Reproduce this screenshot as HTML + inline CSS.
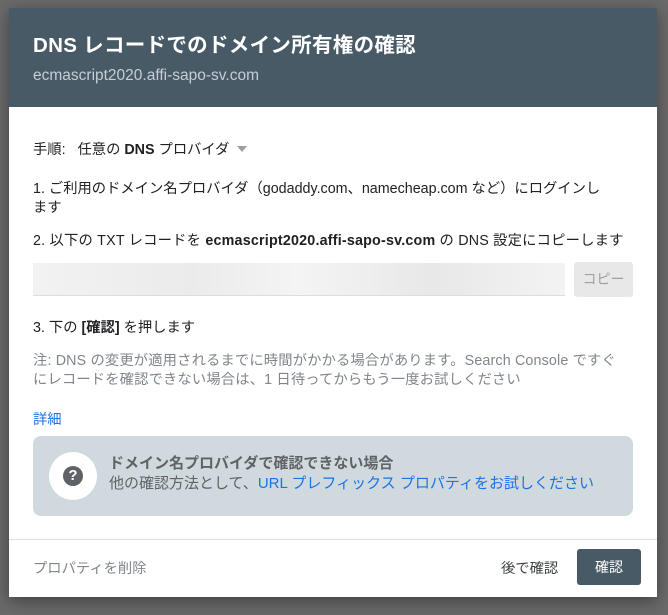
<!DOCTYPE html><html><head><meta charset="utf-8"><style>
body{margin:0;width:668px;height:615px;background:#6a6a6a;overflow:hidden;font-family:"Liberation Sans","Noto Sans CJK JP",sans-serif;position:relative}
.d{position:absolute;left:9px;top:8px;width:648px;height:589px;background:#fff;box-shadow:0 4px 16px rgba(0,0,0,.4)}
.h{height:99px;background:#475a66;color:#fff;box-sizing:border-box;padding:24px 24px 0}
.t{font-size:20.5px;font-weight:bold;line-height:28px;letter-spacing:.3px}
.s{font-size:15.5px;color:#c5ced4;margin-top:7px}
.a{position:absolute;left:24px;font-size:14.3px;color:#202124;white-space:nowrap}
.g{color:#80868b}
</style></head><body>
<div class="d">
<div class="h"><div class="t">DNS レコードでのドメイン所有権の確認</div><div class="s">ecmascript2020.affi-sapo-sv.com</div></div>
<div class="a" style="top:130px">手順: &nbsp; 任意の <b>DNS</b> プロバイダ <span style="display:inline-block;border:5px solid transparent;border-top:6px solid #9aa0a6;vertical-align:-3px;margin-left:4px"></span></div>
<div class="a" style="top:172px;line-height:19px">1. ご利用のドメイン名プロバイダ（godaddy.com、namecheap.com など）にログインし<br>ます</div>
<div class="a" style="top:221px;letter-spacing:.2px">2. 以下の TXT レコードを <b>ecmascript2020.affi-sapo-sv.com</b> の DNS 設定にコピーします</div>
<div style="position:absolute;left:24px;top:255px;width:532px;height:32px;background:linear-gradient(90deg,#f2f2f2,#ebebeb 30%,#f4f4f4 50%,#e8e8e8 75%,#f3f3f3);border-bottom:1px solid #ddd"></div>
<div style="position:absolute;left:565px;top:254px;width:59px;height:35px;background:#e8e8e8;border-radius:3px;color:#a0a0a0;font-size:14px;text-align:center;line-height:35px">コピー</div>
<div class="a" style="top:308px">3. 下の <b>[確認]</b> を押します</div>
<div class="a g" style="top:344px;line-height:19px;letter-spacing:.15px">注: DNS の変更が適用されるまでに時間がかかる場合があります。Search Console ですぐ<br>にレコードを確認できない場合は、1 日待ってからもう一度お試しください</div>
<div class="a" style="top:400px;color:#1a73e8">詳細</div>
<div style="position:absolute;left:24px;top:428px;width:600px;height:80px;background:#d0d9de;border-radius:8px">
<div style="position:absolute;left:16px;top:16px;width:48px;height:48px;border-radius:50%;background:#fff"></div>
<div style="position:absolute;left:30px;top:30px;width:20px;height:20px;border-radius:50%;background:#5f6368;color:#fff;font-weight:bold;font-size:15px;text-align:center;line-height:20px">?</div>
<div style="position:absolute;left:76px;top:18px;font-size:15px;line-height:20px;color:#5f6368;white-space:nowrap"><b>ドメイン名プロバイダで確認できない場合</b><br>他の確認方法として、<span style="color:#1a73e8">URL プレフィックス プロパティをお試しください</span></div>
</div>
<div style="position:absolute;left:0;top:531px;width:648px;border-top:1px solid #e0e0e0;box-shadow:0 -1px 3px rgba(0,0,0,.08)"></div>
<div class="a g" style="top:549px">プロパティを削除</div>
<div class="a" style="top:549px;left:492px;color:#3c4043">後で確認</div>
<div style="position:absolute;left:568px;top:541px;width:64px;height:36px;background:#475a66;border-radius:3px;color:#fff;font-size:14px;text-align:center;line-height:36px">確認</div>
</div>
</body></html>
